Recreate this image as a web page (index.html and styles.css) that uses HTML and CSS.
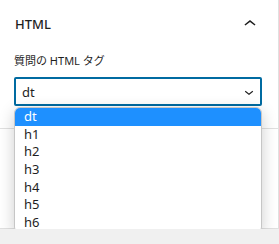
FILE: index.html
```html
<!DOCTYPE html>
<html lang="ja">
<head>
  <meta charset="UTF-8">
  <meta name="viewport" content="width=device-width, initial-scale=1.0">
  <title>HTML タグ設定</title>
  <link rel="stylesheet" href="styles.css">
</head>
<body>
  <div class="sidebar">
    <section class="panel">
      <div class="panel-header">
        <span class="panel-title">HTML</span>
        <svg class="panel-toggle" viewBox="0 0 24 24" width="24" height="24" aria-hidden="true">
          <path d="M6.5 12.4L12 8l5.5 4.4-.9 1.2L12 10l-4.6 3.6-1-1.2z"></path>
        </svg>
      </div>
      <div class="panel-body">
        <label class="field-label">質問の HTML タグ</label>
        <div class="select">
          <span>dt</span>
          <svg class="select-arrow" viewBox="0 0 24 24" width="18" height="18" aria-hidden="true">
            <path d="M17.5 11.6L12 16l-5.5-4.4.9-1.2L12 14l4.6-3.6 1 1.2z"></path>
          </svg>
        </div>
      </div>
    </section>
    <section class="panel panel-next"></section>

    <ul class="dropdown">
      <li class="active">dt</li>
      <li>h1</li>
      <li>h2</li>
      <li>h3</li>
      <li>h4</li>
      <li>h5</li>
      <li>h6</li>
    </ul>
  </div>
</body>
</html>
```

FILE: styles.css
```css
body {
  margin: 0;
  background: #f0f0f0;
  font-family: "Noto Sans", "Noto Sans CJK JP", sans-serif;
  color: #1e1e1e;
}

.sidebar {
  position: relative;
  width: 278px;
  background: #fff;
  border-right: 1px solid #e0e0e0;
}

.panel {
  border-bottom: 1px solid #e0e0e0;
}

.panel-header {
  height: 48px;
  display: flex;
  align-items: center;
  justify-content: space-between;
  padding: 0 16px 0 15px;
}

.panel-title {
  font-size: 13px;
  font-weight: 500;
}

.panel-toggle {
  fill: #1e1e1e;
}

.panel-body {
  height: 80px;
  box-sizing: border-box;
  padding: 5px 16px 0 14px;
}

.field-label {
  display: block;
  font-size: 11px;
  line-height: 16px;
  margin-bottom: 8px;
}

.select {
  height: 29px;
  box-sizing: border-box;
  border: 2px solid #006ba1;
  border-radius: 2px;
  display: flex;
  align-items: center;
  justify-content: space-between;
  padding: 0 2px 0 6px;
  font-size: 13px;
}

.select-arrow {
  fill: #1e1e1e;
}

.panel-next {
  height: 99px;
}

.dropdown {
  position: absolute;
  top: 107px;
  left: 14px;
  width: 248px;
  box-sizing: border-box;
  margin: 0;
  padding: 0;
  list-style: none;
  background: #fff;
  border: 1px solid #c6c6c6;
  border-radius: 6px;
  overflow: hidden;
  box-shadow: 0 4px 16px rgba(0, 0, 0, 0.2);
}

.dropdown li {
  height: 17.7px;
  line-height: 17.7px;
  padding-left: 9px;
  font-size: 13px;
}

.dropdown li.active {
  background: #1e90ff;
  color: #fff;
}
```
